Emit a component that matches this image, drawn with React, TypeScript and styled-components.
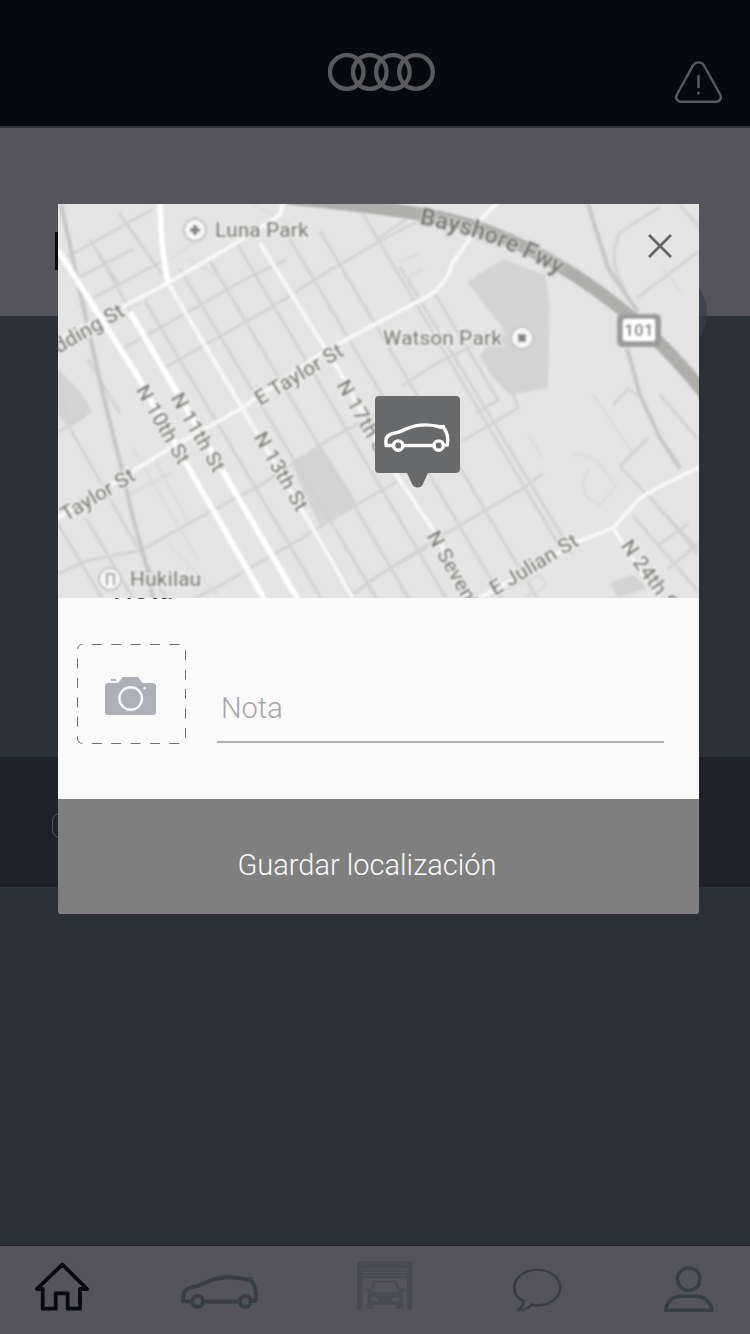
import React from 'react';
import styled, { createGlobalStyle } from 'styled-components';

const GlobalStyle = createGlobalStyle`
  *, *::before, *::after { box-sizing: border-box; }
  body { margin: 0; background: #2c3038; font-family: Roboto, "Liberation Sans", sans-serif; }
  button, input { font: inherit; }
  svg { display: block; }
`;

const Page = styled.div`
  position: relative;
  display: flex;
  flex-direction: column;
  min-height: 100vh;
  background: #2c3038;
`;

const Header = styled.header`
  display: grid;
  grid-template-columns: 1fr auto 1fr;
  align-items: center;
  padding: 38px 28px 0 41px;
  height: 128px;
  background: #060a0f;
  border-bottom: 2px solid #34343b;
`;

const BrandLink = styled.a`
  grid-column: 2;
  padding-bottom: 20px;
`;

const IconButton = styled.button`
  display: grid;
  place-items: center;
  padding: 0;
  border: 0;
  background: none;
  color: inherit;
  cursor: pointer;
`;

const AlertButton = styled(IconButton)`
  justify-self: end;
  color: #555962;
`;

const Hero = styled.section`
  position: relative;
  height: 188px;
  padding: 104px 55px 0;
  background: #55545d;
`;

const HeroAccent = styled.div`
  width: 4px;
  height: 38px;
  background: #060a0f;
`;

const HeroDisc = styled.div`
  position: absolute;
  right: 43px;
  bottom: -40px;
  width: 86px;
  height: 86px;
  border-radius: 50%;
  background: rgba(56, 62, 72, 0.75);
`;

const Content = styled.main`
  flex: 1;
  padding-top: 441px;
`;

const Band = styled.div`
  display: flex;
  align-items: center;
  height: 130px;
  padding: 6px 52px 0;
  background: #1f222a;
`;

const BandChip = styled.div`
  width: 28px;
  height: 25px;
  border: 1px solid #55565e;
  border-radius: 8px;
`;

const TabBar = styled.nav`
  display: grid;
  grid-template-columns: 146fr 176fr 155fr 152fr 86fr;
  align-items: end;
  height: 88px;
  padding: 0 0 22px 35px;
  background: #55545d;
  box-shadow: 0 -1px 0 #1f222a;
`;

const TabLink = styled.a<{ $tone: string }>`
  justify-self: start;
  color: ${(p) => p.$tone};
`;

const Overlay = styled.div`
  position: absolute;
  inset: 0;
  padding: 204px 51px 0 58px;
`;

const Dialog = styled.section`
  display: flex;
  flex-direction: column;
  overflow: hidden;
  border-radius: 0 0 4px 4px;
  background: #fafafa;
`;

const MapPane = styled.div`
  position: relative;
  z-index: 1;
  aspect-ratio: 641 / 394;
  background: #e4e4e4;
`;

const CloseButton = styled(IconButton)`
  position: absolute;
  top: 20px;
  right: 17px;
  width: 44px;
  height: 44px;
  color: #646566;
`;

const NoteRow = styled.div`
  position: relative;
  display: flex;
  gap: 31px;
  padding: 46px 35px 55px 19px;
`;

const NoteLabel = styled.label`
  position: absolute;
  top: -24px;
  left: 55px;
  font-size: 28px;
  line-height: 32px;
  color: #444;
`;

const PhotoButton = styled(IconButton)`
  flex: none;
`;

const NoteInput = styled.input`
  flex: 1;
  min-width: 0;
  height: 99px;
  padding: 30px 4px 0;
  border: 0;
  border-bottom: 2px solid #b0b0b0;
  border-radius: 0;
  outline: 0;
  background: transparent;
  color: #444;
  font-size: 29px;
  font-weight: 300;
  &::placeholder { color: #a6a6a6; opacity: 1; }
`;

const SaveButton = styled.button`
  height: 115px;
  padding: 16px 23px 0 0;
  border: 0;
  background: #7f7f80;
  color: #fafafa;
  font-size: 29px;
  font-weight: 300;
  cursor: pointer;
`;

const Rings = () => (
  <svg width="108" height="38" viewBox="0 0 108 38" fill="none" stroke="#5a5a5f" strokeWidth="4.3">
    {[18.7, 41.8, 64.9, 88].map((cx) => <circle key={cx} cx={cx} cy="19" r="16.8" />)}
  </svg>
);

const Warning = () => (
  <svg width="47" height="43" viewBox="0 0 47 43" fill="none" stroke="currentColor" strokeWidth="2.4" strokeLinecap="round">
    <path d="M18.2 4.2C20.6 .4 26.4 .4 28.8 4.2L45 33.2C47 37 45 40.8 41 40.8H6C2 40.8 0 37 2 33.2Z" />
    <path d="M23.5 15V26" strokeWidth="2.6" />
    <circle cx="23.5" cy="32" r="1.6" fill="currentColor" stroke="none" />
  </svg>
);

const CarShape = () => (
  <g fill="none" stroke="currentColor" strokeWidth="4" strokeLinejoin="round">
    <path d="M10 26.5H2.5L2.2 21.5C2.2 16 6 13 12 12C18 11.4 20.5 9.2 26 7C35 3 42 2.2 49 2.2C58 2.2 64 4.4 69.5 5C73.5 9.5 75 14 75 20L74.5 26H71" />
    <path d="M66 5L70 4.2" strokeLinecap="round" />
    <path d="M23 26.5H58" />
    <circle cx="16.7" cy="26.5" r="5.5" />
    <circle cx="64.3" cy="26.5" r="5.5" />
  </g>
);

const HomeIcon = () => (
  <svg width="54" height="50" viewBox="0 0 54 50" fill="none" stroke="currentColor" strokeWidth="3.8" strokeLinejoin="round">
    <path d="M27.3 2.5L2 27H7.7V46.7H20.7V31.3H32.7V46.7H45V27H52Z" />
  </svg>
);

const CarIcon = () => (
  <svg width="77" height="37" viewBox="0 0 77 37"><CarShape /></svg>
);

const GarageIcon = () => (
  <svg width="56" height="51" viewBox="0 0 56 51" fill="currentColor">
    <path d="M0 4Q0 0 4 0H51.5Q55.5 0 55.5 4V46.5Q55.5 49 52.7 49Q50 49 50 46.5V17.3H5.5V46.5Q5.5 49 2.8 49Q0 49 0 46.5Z" />
    <path d="M5.5 8.3H50M5.5 11.5H50M5.5 14.5H50" stroke="#55545d" strokeWidth="1" />
    <path d="M13 32L17 22Q17.5 20.7 19 20.7H37Q38.5 20.7 39 22L43 32" fill="none" stroke="currentColor" strokeWidth="1.8" />
    <ellipse cx="11" cy="29" rx="2.4" ry="2" />
    <ellipse cx="45" cy="29" rx="2.4" ry="2" />
    <path fillRule="evenodd" d="M13 31.300H43Q46 32 46 36V46Q46 48 44 48H41Q39 48 39 46V44H17V46Q17 48 15 48H12Q10 48 10 46V36Q10 32 13 31.300ZM14 36V40H21V37ZM42 36L35 37V40H42Z" />
  </svg>
);

const ChatIcon = () => (
  <svg width="50" height="44" viewBox="0 0 50 44" fill="none" stroke="currentColor" strokeWidth="2.6">
    <path d="M11.3 33C5.5 30 2.3 25 2.3 19.7C2.3 9.8 12.5 1.8 25.3 1.8S48.3 9.8 48.3 19.7S38 37.4 25.3 37.4Q22.5 37.4 19.7 36.7Q14 42.5 5.5 42Q11.5 39.5 11.3 33Z" />
  </svg>
);

const UserIcon = () => (
  <svg width="50" height="46" viewBox="0 0 50 46" fill="none" stroke="currentColor" strokeWidth="3.5" strokeLinejoin="round">
    <circle cx="24.7" cy="13.3" r="11.3" />
    <path d="M2 44.3C2 36 9 30.2 17 30.2H32C40 30.2 47.4 36 47.4 44.3Z" />
  </svg>
);

const PhotoIcon = () => (
  <svg width="109" height="100" viewBox="0 0 109 100" fill="none">
    <rect x=".5" y=".5" width="108" height="99" rx="5" stroke="#6f6f70" strokeDasharray="10 9.4" strokeDashoffset="10" />
    <path fill="#adb0b7" d="M31 39H41L46 33H61L65.5 39H76Q79 39 79 42V68Q79 71 76 71H31Q28 71 28 68V42Q28 39 31 39Z" />
    <rect x="34" y="35" width="5" height="2" fill="#adb0b7" />
    <circle cx="53.7" cy="54.5" r="11.3" stroke="#fafafa" strokeWidth="2.4" />
    <circle cx="67.7" cy="44.3" r="1.2" fill="#fafafa" />
  </svg>
);

const minorStreets = [
  'M32 35L82 124', 'M60 8L104 70', 'M87 97L263 394', 'M114 86L297 394', 'M122 65L322 400', 'M152 57L354 400',
  'M178 38L388 394', 'M227 27L444 394', 'M262 27L479 394', 'M302 5L500 340', 'M342 63L515 350', 'M377 90L440 196L418 209',
  'M12 224L108 394', 'M0 168L12 224', 'M28 314L75 394', 'M0 320L44 394', 'M30 155L62 210',
  'M9 53L95 5', 'M14 77L75 45', 'M22 101L103 58', 'M35 41L60 79', 'M60 147L84 134L195 71L228 56', 'M108 163L214 103L274 65L340 27L372 12',
  'M0 228L28 212', 'M0 370L28 357L84 346L135 317L206 279L270 236L345 196', 'M137 394L163 381L239 337L300 300L340 277',
  'M345 181L378 160L438 130', 'M295 390L336 361L402 321L464 285L484 270', 'M312 376L369 344', 'M404 237L427 224L460 204L456 190',
  'M318 36L350 14', 'M562 262L590 234', 'M562 262L640 345',
  'M592 293L640 350', 'M575 312L640 387', 'M602 340L630 320', 'M610 365L640 340', 'M602 191L640 235',
  'M602 3L562 28Q552 48 559 68L569 91', 'M579 94L640 48', 'M622 1L640 22', 'M555 201L570 185L580 192',
];

const faintPaths = [
  'M75 245L140 355', 'M95 253L130 317', 'M72 290L115 268', 'M110 340L160 390', 'M340 58L360 50', 'M346 75L365 65',
  'M484 253L470 230', 'M535 190L575 250', 'M605 65L625 90', 'M515 250Q540 250 548 270', 'M531 265Q520 282 530 294L542 301L558 282L537 255',
  'M460 380L480 372Q495 378 480 388L468 393', 'M240 25L195 0', 'M112 56L140 35M130 55L165 75M70 105L90 96',
];

const whiteStreets = [
  'M-10 141L64 103L110 79L180 38L222 11L225 -2',
  'M-2 315L109 246L184 204L265 148L312 123L372 91Q390 78 395 58L409 39L422 16L440 -2',
  'M110 79L184 204L257 328L295 394',
  'M202 39L265 141L282 168L337 269L374 324L412 394',
  'M422 394L519 338L555 324L582 294L605 281L642 263',
  'M555 324L600 394',
];

type MapLabel = { text: string; x: number; y: number; angle?: number };

const mapLabels: MapLabel[] = [
  { text: 'Luna Park', x: 157, y: 33 },
  { text: 'Watson Park', x: 325, y: 141 },
  { text: 'Hukilau', x: 72, y: 382 },
  { text: 'Hedding St', x: -22, y: 163, angle: -30 },
  { text: 'E Taylor St', x: 202, y: 202, angle: -31 },
  { text: 'Taylor St', x: 8, y: 318, angle: -31 },
  { text: 'N 10th St', x: 77, y: 186, angle: 60 },
  { text: 'N 11th St', x: 112, y: 194, angle: 60 },
  { text: 'N 13th St', x: 195, y: 233, angle: 60 },
  { text: 'N 17th St', x: 278, y: 181, angle: 60 },
  { text: 'N Seventeenth St', x: 368, y: 332, angle: 60 },
  { text: 'E Julian St', x: 437, y: 392, angle: -31 },
  { text: 'N 24th St', x: 562, y: 342, angle: 54 },
];

const StreetMap = () => (
  <svg width="100%" height="100%" viewBox="0 0 641 394" preserveAspectRatio="xMidYMid slice" role="img" aria-label="Mapa">
    <defs>
      <filter id="soften"><feGaussianBlur stdDeviation="0.8" /></filter>
      <path id="freeway-label" d="M361 20Q410 29 448 45T530 88" />
    </defs>
    <g filter="url(#soften)" fill="none">
      <path fill="#d3d3d3" d="M409 78L445 55L487 71L492 101L490 184L452 191L432 170L422 151L445 124Z" />
      <path fill="#d3d3d3" d="M239 274L233 257L265 244L299 299L262 322Z M0 165L22 187L34 208L9 224L0 210Z M552 378L575 371L589 384L559 394Z" />
      <path d={minorStreets.join('')} stroke="#d0d0d0" strokeWidth="2.5" />
      <path d={faintPaths.join('')} stroke="#dadada" strokeWidth="2" />
      <g stroke="#c6c6c6" strokeWidth="4">
        <path d="M3 0L25 101L45 191L62 258L75 314L89 364L95 394" />
        <path d="M530 0L550 64L580 108M569 144L582 191L602 234L622 264" />
      </g>
      <path d={whiteStreets.join('')} stroke="#f8f8f8" strokeWidth="4" />
      <path d="M0 46L24 84L80 173L129 261L207 396M72 108L240 396M102 -2Q103 45 110 79" stroke="#fff" strokeWidth="5.5" />
      <path d="M230 -6Q312 2 362 10C430 20 500 54 562 104C595 130 622 158 650 194" stroke="#adadab" strokeWidth="13" />
      <g stroke="#c4c4c4" strokeWidth="2" fill="#f7f7f7">
        <circle cx="137" cy="26" r="11" />
        <circle cx="464" cy="134" r="11" />
        <circle cx="52" cy="375" r="11" />
      </g>
      <g fill="#858585">
        <path d="M135 21H139V24H142V28H139V31H135V28H132V24H135Z" />
        <rect x="460" y="130" width="8" height="8" rx="1" />
      </g>
      <path d="M49 381V370H56V381" stroke="#9a9a9a" strokeWidth="2" />
      <rect x="559" y="110" width="44" height="33" rx="5" fill="#9b9b9b" />
      <rect x="565" y="115" width="32" height="22" rx="2" fill="#fff" />
      <text x="581" y="132" fill="#8a8a8a" fontSize="17" fontWeight="700" textAnchor="middle">101</text>
      <g fill="#7f7f7d" stroke="#eeeeec" strokeWidth="3" paintOrder="stroke" fontSize="21" fontWeight="500">
        {mapLabels.map((l) => (
          <text key={l.text} transform={`translate(${l.x} ${l.y}) rotate(${l.angle ?? 0})`}>{l.text}</text>
        ))}
        <text fontSize="24" fontWeight="700" fill="#7c7c7a" stroke="#d8d8d6" strokeWidth="2">
          <textPath href="#freeway-label">Bayshore Fwy</textPath>
        </text>
      </g>
    </g>
    <path fill="#696a6c" d="M321 192H398Q402 192 402 196V265Q402 269 398 269H370L365 280Q363 283.5 359.5 283.5T354 280L349 269H321Q317 269 317 265V196Q317 192 321 192Z" />
    <g transform="translate(326 219) scale(.85)" color="#fff"><CarShape /></g>
  </svg>
);

const tabs = [
  { name: 'Inicio', tone: '#060a0f', Icon: HomeIcon },
  { name: 'Coche', tone: '#383e47', Icon: CarIcon },
  { name: 'Garaje', tone: '#484a54', Icon: GarageIcon },
  { name: 'Mensajes', tone: '#383e47', Icon: ChatIcon },
  { name: 'Perfil', tone: '#383e47', Icon: UserIcon },
];

export default function App() {
  return (
    <Page>
      <GlobalStyle />
      <Header>
        <BrandLink href="#" aria-label="Audi"><Rings /></BrandLink>
        <AlertButton type="button" aria-label="Avisos"><Warning /></AlertButton>
      </Header>
      <Hero>
        <HeroAccent />
        <HeroDisc />
      </Hero>
      <Content>
        <Band><BandChip /></Band>
      </Content>
      <TabBar>
        {tabs.map(({ name, tone, Icon }) => (
          <TabLink key={name} href="#" aria-label={name} $tone={tone}><Icon /></TabLink>
        ))}
      </TabBar>
      <Overlay>
        <Dialog role="dialog" aria-label="Guardar localización">
          <MapPane>
            <StreetMap />
            <CloseButton type="button" aria-label="Cerrar">
              <svg width="24" height="24" viewBox="0 0 24 24" stroke="currentColor" strokeWidth="2.6">
                <path d="M1 1L23 23M23 1L1 23" />
              </svg>
            </CloseButton>
          </MapPane>
          <NoteRow>
            <NoteLabel htmlFor="note">Nota</NoteLabel>
            <PhotoButton type="button" aria-label="Añadir foto"><PhotoIcon /></PhotoButton>
            <NoteInput id="note" placeholder="Nota" />
          </NoteRow>
          <SaveButton type="button">Guardar localización</SaveButton>
        </Dialog>
      </Overlay>
    </Page>
  );
}
